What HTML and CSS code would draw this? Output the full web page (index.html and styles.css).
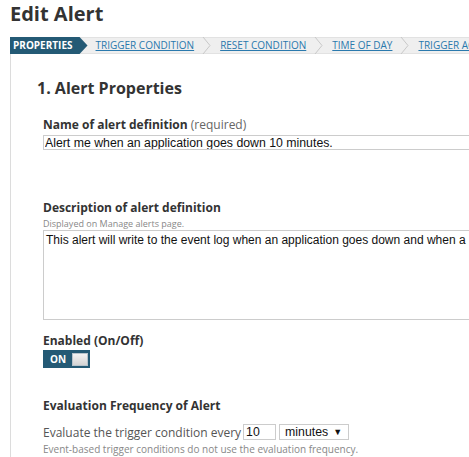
FILE: index.html
```html
<!DOCTYPE html>
<html>
<head>
<meta charset="utf-8">
<link rel="stylesheet" href="styles.css">
</head>
<body>
<h1 class="title">Edit Alert</h1>
<nav class="steps">
  <span class="step active">PROPERTIES</span>
  <a class="step" href="#">TRIGGER CONDITION</a>
  <svg class="chev" width="10" height="17" viewBox="0 0 10 17"><polyline points="1,0 8,8.5 1,17" fill="none" stroke="#c8c8c8" stroke-width="1"/></svg>
  <a class="step" href="#">RESET CONDITION</a>
  <svg class="chev" width="10" height="17" viewBox="0 0 10 17"><polyline points="1,0 8,8.5 1,17" fill="none" stroke="#c8c8c8" stroke-width="1"/></svg>
  <a class="step" href="#">TIME OF DAY</a>
  <svg class="chev" width="10" height="17" viewBox="0 0 10 17"><polyline points="1,0 8,8.5 1,17" fill="none" stroke="#c8c8c8" stroke-width="1"/></svg>
  <a class="step" href="#">TRIGGER ACTIONS</a>
</nav>
<main class="panel">
  <h2 class="heading">1. Alert Properties</h2>
  <div class="section">
    <div class="field name-field">
      <label class="label">Name of alert definition <span class="req">(required)</span></label>
      <input class="text-input" type="text" value="Alert me when an application goes down 10 minutes.">
    </div>
    <div class="field desc-field">
      <label class="label">Description of alert definition</label>
      <div class="hint">Displayed on Manage alerts page.</div>
      <textarea class="text-area">This alert will write to the event log when an application goes down and when a</textarea>
    </div>
    <div class="field enabled-field">
      <label class="label">Enabled (On/Off)</label>
      <div class="toggle"><span class="toggle-text">ON</span><span class="knob"></span></div>
    </div>
    <div class="field freq-field">
      <label class="label">Evaluation Frequency of Alert</label>
      <div class="freq-row">
        <span class="freq-text">Evaluate the trigger condition every</span>
        <input class="num-input" type="text" value="10">
        <div class="select">minutes <span class="arrow">▼</span></div>
      </div>
      <div class="hint event-hint">Event-based trigger conditions do not use the evaluation frequency.</div>
    </div>
  </div>
</main>
</body>
</html>
```
FILE: styles.css
```css
html, body {
  margin: 0;
  padding: 0;
  overflow: hidden;
  background: #fff;
}
body {
  font-family: "Open Sans", sans-serif;
  color: #333;
  width: 700px;
  height: 457px;
}
.title {
  margin: 0;
  padding-left: 10px;
  font-size: 20px;
  line-height: 28px;
  font-weight: 700;
  color: #333;
}
.steps {
  margin: 9px 0 0 10px;
  height: 17px;
  display: flex;
  align-items: center;
  background: #efefef;
  box-shadow: inset 0 1px 0 #e2e2e2, inset 0 -1px 0 #e2e2e2;
  white-space: nowrap;
}
.step {
  font-size: 10px;
  line-height: 17px;
  color: #2a79ad;
  text-decoration: underline;
  margin: 0 8px;
}
.step.active {
  margin: 0;
  background: #245a75;
  color: #fff;
  font-weight: 700;
  text-decoration: none;
  padding: 0 15px 0 3px;
  clip-path: polygon(0 0, calc(100% - 8px) 0, 100% 50%, calc(100% - 8px) 100%, 0 100%);
}
.chev {
  display: block;
  flex: none;
}
.panel {
  margin-left: 10px;
  border-left: 1px solid #dcdcdc;
  padding: 22px 0 0 26px;
  height: 403px;
}
.heading {
  margin: 0;
  font-size: 16px;
  line-height: 24px;
  font-weight: 700;
  color: #333;
}
.section {
  padding-left: 6px;
}
.label {
  display: block;
  font-size: 12px;
  line-height: 16px;
  font-weight: 700;
  color: #333;
}
.req {
  font-weight: 400;
  color: #666;
}
.name-field {
  margin-top: 17px;
}
.text-input {
  display: block;
  box-sizing: border-box;
  margin-top: 2px;
  width: 600px;
  height: 15px;
  border: 1px solid #ccc;
  padding: 0 1px;
  font-family: "Liberation Sans", Arial, sans-serif;
  font-size: 12.3px;
  color: #111;
  outline: none;
}
.desc-field {
  margin-top: 50px;
}
.hint {
  font-size: 9px;
  line-height: 12px;
  color: #888;
  margin-top: 2px;
}
.text-area {
  display: block;
  box-sizing: border-box;
  width: 600px;
  height: 90px;
  margin: 0;
  border: 1px solid #ccc;
  padding: 2px 2px;
  font-family: "Liberation Sans", Arial, sans-serif;
  font-size: 12px;
  line-height: 14px;
  color: #111;
  resize: none;
  overflow: hidden;
  outline: none;
}
.enabled-field {
  margin-top: 13px;
}
.toggle {
  margin-top: 1px;
  width: 47px;
  height: 18px;
  background: #245a75;
  display: flex;
  align-items: center;
  box-sizing: border-box;
  padding: 0 2px 0 7px;
}
.toggle-text {
  color: #fff;
  font-size: 10px;
  font-weight: 700;
  line-height: 18px;
}
.knob {
  margin-left: auto;
  width: 16px;
  height: 13px;
  background: linear-gradient(#f4f4f4, #d4d4d4);
  border: 1px solid #b8c4cc;
  box-sizing: border-box;
}
.freq-field {
  margin-top: 30px;
}
.freq-row {
  margin-top: 10px;
  display: flex;
  align-items: center;
  height: 16px;
}
.freq-text {
  font-size: 12px;
  color: #555;
}
.num-input {
  box-sizing: border-box;
  width: 33px;
  height: 16px;
  margin: 0 0 0 2px;
  border: 1px solid #ccc;
  padding: 0 2px;
  font-family: "Liberation Sans", Arial, sans-serif;
  font-size: 12.3px;
  color: #111;
  outline: none;
}
.select {
  box-sizing: border-box;
  margin-left: 3px;
  width: 70px;
  height: 16px;
  border: 1px solid #ccc;
  padding: 0 6px 0 5px;
  font-family: "Liberation Sans", Arial, sans-serif;
  font-size: 12.3px;
  line-height: 14px;
  color: #111;
  display: flex;
  align-items: center;
}
.arrow {
  font-size: 9px;
  margin-left: auto;
}
.event-hint {
  font-size: 10px;
  margin-top: 3px;
}
```
